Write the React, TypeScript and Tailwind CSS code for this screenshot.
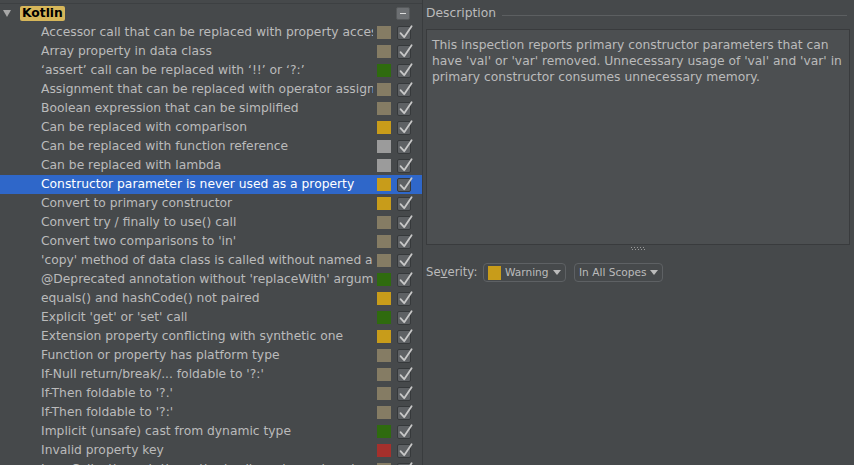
const C = {
  beige: 'bg-[#857c64]',
  green: 'bg-[#2f6b0f]',
  yellow: 'bg-[#c89c1a]',
  gray: 'bg-[#9b9b9b]',
  red: 'bg-[#a5302c]',
}

type Row = { text: string; color: keyof typeof C }

const rows: Row[] = [
  { text: 'Accessor call that can be replaced with property access syntax', color: 'beige' },
  { text: 'Array property in data class', color: 'beige' },
  { text: '\u2018assert\u2019 call can be replaced with \u2018!!\u2019 or \u2018?:\u2019', color: 'green' },
  { text: 'Assignment that can be replaced with operator assignment', color: 'beige' },
  { text: 'Boolean expression that can be simplified', color: 'beige' },
  { text: 'Can be replaced with comparison', color: 'yellow' },
  { text: 'Can be replaced with function reference', color: 'gray' },
  { text: 'Can be replaced with lambda', color: 'gray' },
  { text: 'Constructor parameter is never used as a property', color: 'yellow' },
  { text: 'Convert to primary constructor', color: 'yellow' },
  { text: 'Convert try / finally to use() call', color: 'beige' },
  { text: "Convert two comparisons to 'in'", color: 'beige' },
  { text: "'copy' method of data class is called without named arguments", color: 'beige' },
  { text: "@Deprecated annotation without 'replaceWith' argument", color: 'green' },
  { text: 'equals() and hashCode() not paired', color: 'yellow' },
  { text: "Explicit 'get' or 'set' call", color: 'green' },
  { text: 'Extension property conflicting with synthetic one', color: 'yellow' },
  { text: 'Function or property has platform type', color: 'beige' },
  { text: "If-Null return/break/... foldable to '?:'", color: 'beige' },
  { text: "If-Then foldable to '?.'", color: 'beige' },
  { text: "If-Then foldable to '?:'", color: 'beige' },
  { text: 'Implicit (unsafe) cast from dynamic type', color: 'green' },
  { text: 'Invalid property key', color: 'red' },
  { text: 'Java Collections static method call can be replaced', color: 'beige' },
]

const SELECTED = 8

function Check() {
  return (
    <div className="relative w-[14px] h-[14px] rounded-[2px] bg-[#5e6164] border border-[#36393b]">
      <svg className="absolute -left-[1px] -top-[2px] overflow-visible" width="16" height="16" viewBox="0 0 16 16">
        <path d="M3.5 8.2 L7.2 12.2 L14.6 1.2" fill="none" stroke="#c8c8c8" strokeWidth="1.8" strokeLinecap="round" strokeLinejoin="round" />
      </svg>
    </div>
  )
}

function Dropdown({ swatch, label, w }: { swatch?: boolean; label: string; w: string }) {
  return (
    <div className={`flex shrink-0 items-center h-[19px] ${w} rounded-[4px] border border-[#5e6164] bg-[#46494b] pl-[4px] pr-[4px] whitespace-nowrap text-[10.6px]`}>
      {swatch && <div className="w-[13px] h-[14px] bg-[#c89c1a] mr-[4px]" />}
      <span className="text-[#bbbbbb]">{label}</span>
      <svg className="ml-auto" width="8" height="5" viewBox="0 0 8 5">
        <path d="M0 0 L8 0 L4 5 Z" fill="#bbbbbb" />
      </svg>
    </div>
  )
}

export default function App() {
  return (
    <div className="flex w-[854px] h-[465px] overflow-hidden bg-[#46494b] text-[12.3px] text-[#bbbbbb] font-['DejaVu_Sans',sans-serif]">
      {/* tree */}
      <div className="w-[423px] shrink-0 border-r border-[#393c3e] pt-[3px]">
        <div className="border-t border-[#3d4042]">
          <div className="flex items-center h-[19px] relative">
            <svg className="ml-[3px]" width="8" height="7" viewBox="0 0 8 7">
              <path d="M0 0 L8 0 L4 7 Z" fill="#a8a8a8" />
            </svg>
            <span className="ml-[9px] px-[2px] h-[15px] leading-[15px] rounded-[2px] bg-[#d6b65a] text-black font-bold">Kotlin</span>
            <div className="ml-auto mr-[12px] w-[14px] h-[13px] rounded-[2px] bg-[#6c6f72] border border-[#56595b] flex items-center justify-center">
              <div className="w-[6px] h-[1px] bg-[#dcdcdc]" />
            </div>
          </div>
          {rows.map((r, i) => (
            <div key={i} className={`flex items-center h-[19px] ${i === SELECTED ? 'bg-[#2f67c9] text-white' : ''}`}>
              <div className="ml-[41px] w-[332px] overflow-hidden whitespace-nowrap">{r.text}</div>
              <div className={`ml-[4px] w-[14px] h-[13px] ${C[r.color]}`} />
              <div className="ml-[6px]">
                <Check />
              </div>
            </div>
          ))}
        </div>
      </div>

      {/* description */}
      <div className="flex-1 flex flex-col pl-[3px] pr-[4px]">
        <div className="flex items-center h-[29px] pb-[3px]">
          <span>Description</span>
          <div className="flex-1 h-[1px] bg-[#5c5f61] ml-[6px] mt-[5px] mr-[3px]" />
        </div>
        <div className="h-[216px] bg-[#4c4f51] border border-[#393b3d] px-[5px] pt-[7px] leading-[16px]">
          This inspection reports primary constructor parameters that can have 'val' or 'var' removed. Unnecessary usage of 'val' and 'var' in primary constructor consumes unnecessary memory.
        </div>
        <div className="flex justify-center h-[8px] items-center">
          <svg width="14" height="4" viewBox="0 0 14 4">
            {[0, 3, 6, 9, 12].map((x) => (
              <g key={x}>
                <rect x={x} y="0" width="1" height="1" fill="#9a9a9a" />
                <rect x={x + 1} y="2" width="1" height="1" fill="#9a9a9a" />
              </g>
            ))}
          </svg>
        </div>
        <div className="flex items-center mt-[10px]">
          <span className="whitespace-nowrap w-[57px] text-[11.7px]">
            Se<span className="underline">v</span>erity:
          </span>
          <Dropdown swatch label="Warning" w="w-[83px]" />
          <div className="ml-[8px]">
            <Dropdown label="In All Scopes" w="w-[89px]" />
          </div>
        </div>
      </div>
    </div>
  )
}
